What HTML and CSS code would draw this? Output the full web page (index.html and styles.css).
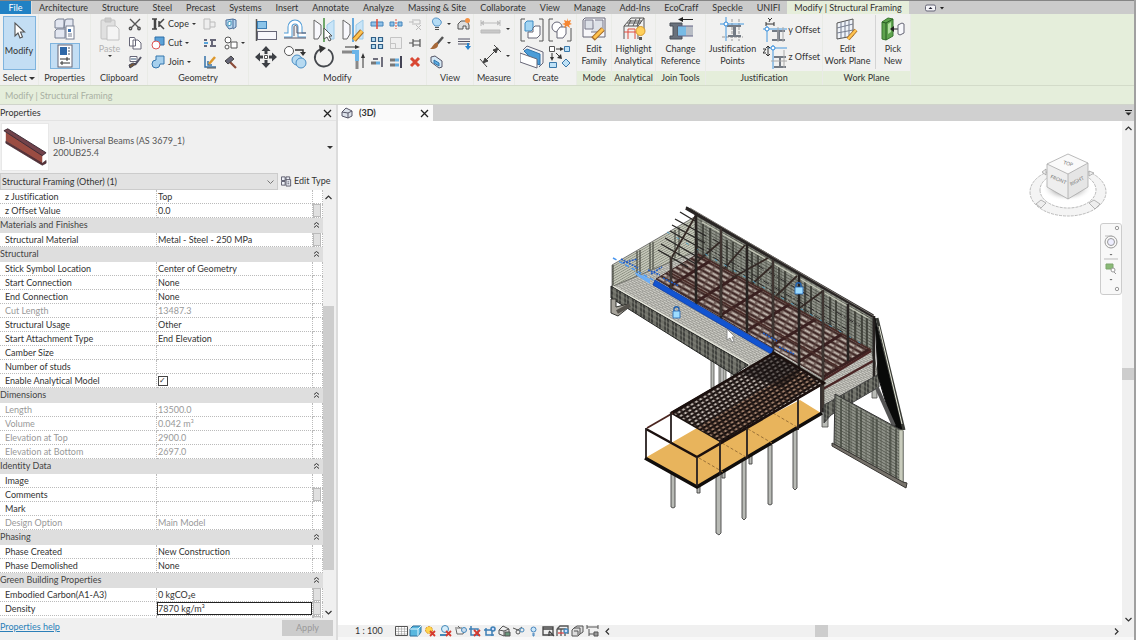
FILE: index.html
```html
<!DOCTYPE html>
<html lang="en">
<head>
<meta charset="utf-8">
<title>Modify | Structural Framing</title>
<link rel="stylesheet" href="styles.css">
</head>
<body>
<div class="app">
<nav class="tabs">
  <button class="tab tab-file">File</button>
  <button class="tab">Architecture</button><button class="tab">Structure</button><button class="tab">Steel</button><button class="tab">Precast</button><button class="tab">Systems</button><button class="tab">Insert</button><button class="tab">Annotate</button><button class="tab">Analyze</button><button class="tab">Massing &amp; Site</button><button class="tab">Collaborate</button><button class="tab">View</button><button class="tab">Manage</button><button class="tab">Add-Ins</button><button class="tab">EcoCraff</button><button class="tab">Speckle</button><button class="tab">UNIFI</button>
  <button class="tab tab-active">Modify | Structural Framing</button>
  <button class="tab-toggle" aria-label="Minimize ribbon"><svg width="20" height="10" viewBox="0 0 20 10"><rect x=".5" y="2" width="10" height="6" rx="1.5" fill="#f4f4f8" stroke="#667"/><path d="M3.5 6h4L5.500 4z" fill="#223"/><path d="M15 4h4l-2 2.500z" fill="#222"/></svg></button>
</nav>

<div class="ribbon">
  <section class="panel p-select">
    <div class="panel-body"><button class="big pressed" aria-pressed="true"><svg class="i24" viewBox="0 0 24 24"><path d="M8 4v13l3-3 2 5 2.500-1-2-5h4z" fill="#fff" stroke="#555" stroke-width="1.100"/></svg><span>Modify</span></button></div>
    <h2>Select <i class="arr"></i></h2>
  </section>
  <section class="panel p-properties">
    <div class="panel-body stack">
      <button aria-label="Type properties"><svg class="i24" viewBox="0 0 24 24" fill="#e3e7f1" stroke="#777f91"><path d="M3 3l2-1h6v9H2V4zM12 3l2-1h6v9h-9zM3 13l1-1h8v9H2v-7z"/><rect x="13" y="9" width="8" height="13" fill="#fff"/><path d="M15 12h3v3h-3z" fill="#3b6fae" stroke="none"/><path d="M15 17h4M15 19h4"/></svg></button>
      <button class="pressed wide" aria-label="Properties"><svg class="i24" viewBox="0 0 24 24"><rect x="5" y="1" width="14" height="22" fill="#fff" stroke="#667"/><path d="M7 3h7v8H7z" fill="#2f68a8"/><path d="M15 4h2M15 7h2M15 10h2" stroke="#456"/><path d="M7 15h10M7 19h10M14 13v4M9 17v4" stroke="#333"/></svg></button>
    </div>
    <h2>Properties</h2>
  </section>
  <section class="panel p-clipboard">
    <div class="panel-body">
      <button class="big off" disabled><svg class="i24" viewBox="0 0 24 24" fill="#e0e0e0" stroke="#c2c2c2"><rect x="3" y="3" width="14" height="19" rx="1"/><path d="M7 1h6v4H7z" fill="#ccc"/><path d="M9 9h9l3 3v11H9z" fill="#f4f4f4"/></svg><span>Paste<br><i class="arr tiny up"></i></span></button>
      <div class="smalls">
        <button aria-label="Cut to clipboard"><svg class="i14" viewBox="0 0 14 14" fill="none" stroke="#555" stroke-width="1.400"><path d="M2 2l9 9M12 2L3 11"/><circle cx="2.500" cy="11.500" r="1.200"/><circle cx="11" cy="11.500" r="1.200"/></svg></button>
        <button aria-label="Copy to clipboard"><svg class="i14" viewBox="0 0 14 14" fill="#fff" stroke="#667"><path d="M1.500 1.500h5l1 2V10h-6zM5 4h5l3 3v6H5z"/></svg></button>
        <button aria-label="Match type"><svg class="i14" viewBox="0 0 14 14"><path d="M2 1.500h7v5H2z" fill="#fff" stroke="#667"/><path d="M3 3h5v2H3z" fill="#9ab"/><path d="M13 2L7 10" stroke="#556" stroke-width="2"/><path d="M8 9l-6 4-1-3 4-2z" fill="#775a38" stroke="#445"/></svg></button>
      </div>
    </div>
    <h2>Clipboard</h2>
  </section>
  <section class="panel p-geometry">
    <div class="panel-body">
      <div class="smalls">
        <button class="lab"><svg class="i14" viewBox="0 0 14 14" stroke="#444" fill="none"><path d="M1 2h5M1 12h5M3.500 2v10M4.500 2v10M8 7l5-5M8 7l5 5M8 4v6" stroke-width="1.500"/></svg>Cope<i class="arr tiny"></i></button>
        <button class="lab"><svg class="i14" viewBox="0 0 14 14"><path d="M4 1h9v8H4z" fill="#5ba2d8" stroke="#2e6ea8"/><circle cx="5" cy="9" r="4" fill="#fff" stroke="#d55"/></svg>Cut<i class="arr tiny"></i></button>
        <button class="lab"><svg class="i14" viewBox="0 0 14 14"><path d="M5 1h8v8H9a4 4 0 1 1-4-4z" fill="#a7d0ed" stroke="#3576ad"/></svg>Join<i class="arr tiny"></i></button>
      </div>
      <div class="smalls">
        <button aria-label="Split face"><svg class="i14" viewBox="0 0 14 14" fill="#eee" stroke="#bbb"><path d="M1 2h6v3h5v5H7v2H1zM7 5v5"/></svg></button>
        <button aria-label="Beam joins"><svg class="i14" viewBox="0 0 14 14" stroke="#667" stroke-width="2"><path d="M1 4h3M7 4h6M1 10h3M7 10h6M9 5v4"/><path d="M1 7h4" stroke="#58a4db"/></svg></button>
        <button aria-label="Paint"><svg class="i14" viewBox="0 0 14 14" fill="none"><path d="M2 1v11h11M5 6v4h4" stroke="#3472a8" stroke-width="1.500"/><path d="M6 9l6-7" stroke="#dd982c" stroke-width="2.500"/><path d="M4 13h9" stroke="#555"/></svg></button>
      </div>
      <div class="smalls">
        <button aria-label="Wall opening"><svg class="i14" viewBox="0 0 14 14"><path d="M2 3l7-1v9l-4 1-3-4zM9 2l3 1v7l-3 2" fill="#b7d5ef" stroke="#4c6f99"/><path d="M4 5l3-1v4L4 9z" fill="#fff" stroke="#49b"/></svg></button>
        <button class="lab"><svg class="i14" viewBox="0 0 14 14" fill="#fff" stroke="#555"><circle cx="4" cy="4" r="3"/><circle cx="3" cy="11" r="2"/><path d="M7 6h6v6H7z"/></svg><i class="arr tiny"></i></button>
        <button aria-label="Demolish"><svg class="i14" viewBox="0 0 14 14"><path d="M5 6l7 7" stroke="#8b4c39" stroke-width="2.200"/><path d="M1 6l6-5 3 3-6 5z" fill="#667" stroke="#444"/></svg></button>
      </div>
    </div>
    <h2>Geometry</h2>
  </section>
  <section class="panel p-modify">
    <div class="panel-body">
      <div class="quad">
        <button aria-label="Align"><svg class="i24" viewBox="0 0 24 24"><path d="M2.500 1v22" stroke="#555" stroke-width="1.500"/><rect x="3.500" y="3.500" width="9" height="7" fill="#8bc4e9" stroke="#3b7eb5"/><rect x="3.500" y="13.500" width="19" height="8" fill="#f7f7fb" stroke="#667"/></svg></button>
        <button aria-label="Offset"><svg class="i24" viewBox="0 0 24 24" fill="none"><path d="M1 17h6V9a5 5 0 0 1 10 0v8h6" stroke="#4d9ad5" stroke-width="5"/><path d="M1 17h6V9a5 5 0 0 1 10 0v8h6" stroke="#fff" stroke-width="3"/><path d="M1 20h22M11 18V9c0-2 3-2 3 0v6h9" stroke="#556"/></svg></button>
        <button aria-label="Mirror, pick axis"><svg class="i24" viewBox="0 0 24 24"><path d="M2 2l7 5v9l-3 5H2z" fill="#f8f8fc" stroke="#666"/><path d="M22 2l-7 5v9l3 5h4z" fill="#c9e5f8" stroke="#9ccbe9"/><path d="M12 0v24" stroke="#44913f" stroke-width="1.500"/><path d="M12 10v11l3-2 2 4 2-1-2-4h3z" fill="#fff" stroke="#555"/></svg></button>
        <button aria-label="Mirror, draw axis"><svg class="i24" viewBox="0 0 24 24"><path d="M2 2l7 5v9l-3 5H2z" fill="#f8f8fc" stroke="#666"/><path d="M22 2l-7 5v9l3 5h4z" fill="#c9e5f8" stroke="#9ccbe9"/><path d="M12 0v24" stroke="#3c92d6" stroke-width="1.500"/><path d="M13 22l8-9" stroke="#a66c26" stroke-width="5"/><path d="M13 22l8-9" stroke="#ffc34f" stroke-width="3"/></svg></button>
        <button aria-label="Move"><svg class="i24" viewBox="0 0 24 24" fill="#3d4045"><path d="M12 1l4.500 5h-3v3h-3V6h-3zM12 23l4.500-5h-3v-3h-3v3h-3zM1 12l5-4.500v3h3v3H6v3zM23 12l-5-4.500v3h-3v3h3v3z"/><path d="M10.500 10.500h3v3h-3z" fill="#fff" stroke="#555"/></svg></button>
        <button aria-label="Copy"><svg class="i24" viewBox="0 0 24 24"><circle cx="6" cy="6" r="4.500" fill="#fff" stroke="#555"/><path d="M12 5h8v3" stroke="#333" stroke-width="1.500" fill="none"/><path d="M17 7h6l-3 4z" fill="#333"/><circle cx="14" cy="15" r="5" fill="#b7daf1" stroke="#498ec5"/><circle cx="18" cy="18" r="5" fill="#b7daf1" stroke="#498ec5"/></svg></button>
        <button aria-label="Rotate"><svg class="i24" viewBox="0 0 24 24"><path d="M16 4.500a9 9 0 1 1-7-.5" fill="none" stroke="#45484d" stroke-width="1.800"/><path d="M7 0l7 3-6 5z" fill="#333"/></svg></button>
        <button aria-label="Trim"><svg class="i24" viewBox="0 0 24 24"><path d="M1 7h12M16 13v11" stroke="#888" stroke-width="3"/><path d="M11 7h5v9" stroke="#6bb5e9" stroke-width="4" fill="none"/><path d="M4 2h11M22 23V12" stroke="#333"/><path d="M14 0l5 2-5 2zM20 13l2-5 2 5z" fill="#333"/></svg></button>
      </div>
      <div class="smalls three">
        <button aria-label="Split element"><svg class="i14" viewBox="0 0 14 14"><path d="M1 5h12v4H1z" fill="#8fc1e8" stroke="#4484ba"/><path d="M7 2v10" stroke="#e34937" stroke-width="1.500"/></svg></button>
        <button aria-label="Split with gap"><svg class="i14" viewBox="0 0 14 14"><path d="M1 5h4v4H1zM9 5h4v4H9z" fill="#8fc1e8" stroke="#4484ba"/><path d="M7 2v10" stroke="#e34937" stroke-dasharray="2 1"/></svg></button>
        <button aria-label="Unpin"><svg class="i14" viewBox="0 0 14 14" fill="none" stroke="#bbb"><path d="M1 5h4M5 2v6M6 3h6v4H6M8 8l5 5M13 8l-5 5"/></svg></button>
        <button aria-label="Array"><svg class="i14" viewBox="0 0 14 14" fill="#b7dff5" stroke="#315f87" stroke-width="1.200"><path d="M1.500 1.500h4v4h-4zM8.500 1.500h4v4h-4zM1.500 8.500h4v4h-4zM8.500 8.500h4v4h-4z"/></svg></button>
        <button aria-label="Scale"><svg class="i14" viewBox="0 0 14 14" fill="#eee" stroke="#c4c4c4"><path d="M1.500 1.500h11v11h-11zM1.500 7.500h5v5h-5z"/></svg></button>
        <button aria-label="Pin"><svg class="i14" viewBox="0 0 14 14" fill="none" stroke="#555" stroke-width="1.200"><path d="M1 7h4M5 3v8M5 5h7v4H5M12 3v8"/></svg></button>
        <button aria-label="Trim single"><svg class="i14" viewBox="0 0 14 14"><path d="M1 8h5" stroke="#777" stroke-width="3"/><path d="M6 8h4" stroke="#66aee0" stroke-width="3"/><path d="M12 2v10M3 4h5" stroke="#445" stroke-width="1.500"/></svg></button>
        <button aria-label="Trim multiple"><svg class="i14" viewBox="0 0 14 14"><path d="M1 5h5M1 10h5" stroke="#777" stroke-width="3"/><path d="M6 5h4M6 10h4" stroke="#66aee0" stroke-width="3"/><path d="M12 1v12" stroke="#445" stroke-width="2"/></svg></button>
        <button aria-label="Delete"><svg class="i14" viewBox="0 0 14 14"><path d="M3 3l8 8M11 3l-8 8" stroke="#d94733" stroke-width="3"/></svg></button>
      </div>
    </div>
    <h2>Modify</h2>
  </section>
  <section class="panel p-view">
    <div class="panel-body">
      <div class="smalls">
        <button class="lab"><svg class="i14" viewBox="0 0 14 14"><path d="M5 9C-1 3 5-1 9 2s2 5 0 7z" fill="#b4dcf5" stroke="#5290c3"/><path d="M5 10.500h4M5 12.500h4" stroke="#555"/></svg><i class="arr tiny"></i></button>
        <button class="lab"><svg class="i14" viewBox="0 0 14 14"><path d="M13 1L7 8" stroke="#555" stroke-width="2.500"/><path d="M8 7C5 5 3 11 0 13c4 0 9 0 8-6z" fill="#a66839"/></svg><i class="arr tiny"></i></button>
        <button aria-label="Selection box"><svg class="i14" viewBox="0 0 14 14"><path d="M1 2l4-1 7 5v6l-3 1-8-6z" fill="#d7e9f5" stroke="#556"/><path d="M4 5l5 3v3L4 8z" fill="#5faee3" stroke="#2f75ad"/></svg></button>
      </div>
      <div class="smalls">
        <button aria-label="Displace"><svg class="i14" viewBox="0 0 14 14"><path d="M1 7l3-3h6l2 4v4H9V9H6v3H1z" fill="#ddd" stroke="#555"/><circle cx="10.500" cy="3.500" r="2.500" fill="#f49244"/></svg></button>
        <button aria-label="Linework"><svg class="i14" viewBox="0 0 14 14"><path d="M1 3h12M1 5.500h12M1 8h12" stroke="#556" stroke-width="1.200"/><path d="M10 7v3H8l3 4 3-4h-2V7z" fill="#2983cb"/></svg></button>
      </div>
    </div>
    <h2>View</h2>
  </section>
  <section class="panel p-measure">
    <div class="panel-body stack">
      <button class="lab"><svg class="i24" viewBox="0 0 24 24" stroke="#bbb" fill="#c8c8c8"><path d="M2 6h19M2 3v6M21 3v6M5 4L2 6l3 2M18 4l3 2-3 2"/><path d="M2 13h19v3H2z"/></svg><i class="arr tiny"></i></button>
      <button class="lab"><svg class="i24" viewBox="0 0 24 24" stroke="#444" fill="#444"><path d="M4 19L19 4M1 15l7 8M15 1l7 7"/><path d="M4 19l2-5 3 3zM19 4l-5 2 3 3z"/></svg><i class="arr tiny"></i></button>
    </div>
    <h2>Measure</h2>
  </section>
  <section class="panel p-create">
    <div class="panel-body"><div class="quad two">
      <button aria-label="Create assembly"><svg class="i24" viewBox="0 0 24 24"><path d="M5 1H1v22h4M19 1h4v22h-4" fill="none" stroke="#555"/><path d="M5 5l2-2h6v8l-2 2H5z" fill="#a4d5f2" stroke="#3d8bc4"/><path d="M8 14h5v-4l2-2h5v9l-3 3H8z" fill="#fff" stroke="#667"/></svg></button>
      <button aria-label="Create group"><svg class="i24" viewBox="0 0 24 24"><path d="M5 1H1v22h4M23 10v13h-4" fill="none" stroke="#555"/><circle cx="9" cy="9" r="5" fill="#fff" stroke="#667"/><path d="M9 13l3-4h6v7l-3 4H9z" fill="#fff" stroke="#667"/><path d="M19 0l1 3 3-1-1 3 2 1-3 1 1 3-3-2-3 2 1-3-3-1 3-1-1-3 3 1z" fill="#f58632"/></svg></button>
      <button aria-label="Create parts"><svg class="i24" viewBox="0 0 24 24"><path d="M3 5l4-4 16 6v11l-4 4" fill="#f3f3f5" stroke="#667"/><path d="M4 6l3-2 13 5v11l-3-1z" fill="#4b9cd7" stroke="#2f75ad"/><path d="M0 8l17 6v9L0 17z" fill="#fff" stroke="#667"/></svg></button>
      <button aria-label="Create similar"><svg class="i24" viewBox="0 0 24 24" fill="#bee1f6" stroke="#3a78a9"><path d="M1.500 1.500h5v5h-5z" fill="#fff" stroke="#555"/><path d="M16.500 1.500h5v5h-5zM1.500 17.500h7v5h-7zM18 14l4 4-4 4-4-4z"/><path d="M8 4h5M4 8v5M8 8l5 5" stroke="#333"/><path d="M12 2l4 2-4 2zM2 12l2 4 2-4zM13 9l1 5-5-1z" fill="#333" stroke="none"/></svg></button>
    </div></div>
    <h2>Create</h2>
  </section>
  <section class="panel ctx p-mode">
    <div class="panel-body"><button class="big"><svg class="i24" viewBox="0 0 24 24"><path d="M1 3l2-2h20v19H1z" fill="#f7f7fa" stroke="#667"/><path d="M3 3h8v9H3zM13 3h8v12H9" fill="#dde1e8" stroke="#778"/><path d="M11 22l10-10" stroke="#a66c26" stroke-width="5"/><path d="M12 21l9-9" stroke="#ffc34f" stroke-width="3"/></svg><span>Edit<br>Family</span></button></div>
    <h2>Mode</h2>
  </section>
  <section class="panel ctx p-analytical">
    <div class="panel-body"><button class="big"><svg class="i24" viewBox="0 0 24 24"><path d="M2 9l7-8h13v12M2 9h14l6-8M7 4h13M5 6h14M2 9v13M16 9v13M9 3L6 9M14 2l-3 7M18 1l-3 8" fill="none" stroke="#555"/><path d="M6 22V12h7v10M2 15h14" fill="none" stroke="#df4c3e"/><circle cx="18.500" cy="14" r="4.500" fill="#ffd05b" stroke="#d79b2e"/><path d="M17 20h3v3h-3z" fill="#555"/></svg><span>Highlight<br>Analytical</span></button></div>
    <h2>Analytical</h2>
  </section>
  <section class="panel ctx p-join">
    <div class="panel-body"><button class="big"><svg class="i24" viewBox="0 0 24 24"><path d="M1 6h12v3H9v10h4v3H1v-3h3V9H1z" fill="#69717b" stroke="#484f58"/><path d="M9 9h8v10H9z" fill="#78bbe5"/><path d="M17 9h7v10h-7z" fill="#b8bdc5"/><path d="M9 9h15M9 19h15" stroke="#668"/><path d="M24 2.500H13" stroke="#222"/><path d="M14 0v5l-5-2.500z" fill="#222"/></svg><span>Change<br>Reference</span></button></div>
    <h2>Join Tools</h2>
  </section>
  <section class="panel ctx p-just">
    <div class="panel-body">
      <button class="big"><svg class="i24" viewBox="0 0 24 24"><path d="M12 2v22M19 2v22M2 20h21" stroke="#999" stroke-dasharray="3 1"/><path d="M7 8h14v2h-5v8h5v2H8v-2h5v-8H7z" fill="#747b84"/><path d="M6 0v24M0 7h24" stroke="#4598df"/><circle cx="6" cy="7" r="2" fill="#fff" stroke="#318bdb"/></svg><span>Justification<br>Points</span></button>
      <div class="stack">
        <button class="lab"><svg class="i24" viewBox="0 0 24 24"><path d="M9 12h13v2h-5v7h5v2H9v-2h5v-7H9z" fill="#747b84"/><path d="M4 8v16M0 11h24" stroke="#4598df"/><path d="M15 9v15M20 9v15" stroke="#aaa"/><circle cx="4" cy="11" r="2" fill="#fff" stroke="#318bdb"/><path d="M3 6h8M3 4v4M11 4v4M5 0l2 2 2-2M7 2L6 4" stroke="#333" fill="none"/></svg>y Offset</button>
        <button class="lab"><svg class="i24" viewBox="0 0 24 24"><path d="M11 11h12v2h-5v8h5v2H11v-2h5v-8h-5z" fill="#747b84"/><path d="M10 0v24M5 3h19" stroke="#4598df"/><path d="M8 16h16M21 5v18" stroke="#aaa"/><circle cx="10" cy="3" r="2" fill="#fff" stroke="#318bdb"/><path d="M5 2v9M3 3l2-2 2 2M3 9l2 2 2-2M0 4h3L0 8h3" stroke="#333" fill="none"/></svg>z Offset</button>
      </div>
    </div>
    <h2>Justification</h2>
  </section>
  <section class="panel ctx p-work">
    <div class="panel-body">
      <button class="big"><svg class="i24" viewBox="0 0 24 24"><path d="M2 6l16-4v17L2 22z" fill="#eff3f9" stroke="#555"/><path d="M6 5v16M10 4v16M14 3v17M2 11l16-4M2 16l16-3" stroke="#777f91"/><path d="M13 22l8-9" stroke="#a66c26" stroke-width="4"/><path d="M13 22l8-9" stroke="#ffc34f" stroke-width="2.500"/></svg><span>Edit<br>Work Plane</span></button>
      <button class="big pick"><svg class="i24" viewBox="0 0 24 24"><path d="M1 5l6-4 5 1v17l-7 4-4-1z" fill="#5ea34e" stroke="#37752e"/><path d="M1 5l4 1v17M5 6l7-4" fill="none" stroke="#275b22"/><path d="M7 7l3-2v10l-3 2z" fill="#b3dfa2"/><path d="M10 12h7" stroke="#222"/><path d="M13 9v6l-4-3z" fill="#222"/><path d="M17 8l4-2 2 1v9l-4 2-2-1z" fill="#f8f8fc" stroke="#667"/></svg><span>Pick<br>New</span></button>
    </div>
    <h2>Work Plane</h2>
  </section>
</div>
<div class="options">Modify | Structural Framing</div>

<main class="work">
<aside class="props">
  <header class="props-head"><span>Properties</span><button aria-label="Close properties"><svg width="9" height="9" viewBox="0 0 9 9"><path d="M1 1l7 7M8 1L1 8" stroke="#222" stroke-width="1.300"/></svg></button></header>
  <button class="type">
    <svg class="thumb" viewBox="0 0 48 48"><path d="M4 8l38 24v10L4 18z" fill="#9a4c42"/><path d="M2 7l4-2 40 25-4 3z" fill="#71424a" stroke="#3d2b35"/><path d="M4 18l38 23 4-3v3l-4 2L4 20z" fill="#5c3137" stroke="#3d2b35" stroke-width=".7"/></svg>
    <span>UB-Universal Beams (AS 3679_1)<br>200UB25.4</span><i class="arr"></i>
  </button>
  <div class="filter"><div class="combo"><select aria-label="Element filter"><option>Structural Framing (Other) (1)</option></select><svg width="7" height="5" viewBox="0 0 7 5"><path d="M.5 .5l3 3 3-3" fill="none" stroke="#777"/></svg></div>
  <button class="edit-type"><svg width="11" height="12" viewBox="0 0 12 12" fill="#eef1f8" stroke="#556"><path d="M.5 1.500h4v4h-4zM5.500 1.500h4v4h-4zM.5 6.500h4v4h-4z"/><path d="M5.500 4.500h5v7h-5z"/><path d="M7 7h2M7 9h2"/></svg>Edit Type</button></div>
  <div class="list">
    <div class="rows"><table>
      <colgroup><col class="c1"><col><col class="c3"></colgroup>
      <tr><th>z Justification</th><td>Top</td><td></td></tr>
      <tr><th>z Offset Value</th><td>0.0</td><td class="has"><button aria-label="Associate offset"></button></td></tr>
      <tr class="grp"><th colspan="2">Materials and Finishes</th><td><svg width="7" height="8" viewBox="0 0 7 8"><path d="M1 3.500l2.500-2 2.500 2M1 6.500l2.500-2 2.500 2" fill="none" stroke="#333"/></svg></td></tr>
      <tr><th>Structural Material</th><td>Metal - Steel - 250 MPa</td><td class="has"><button aria-label="Associate material"></button></td></tr>
      <tr class="grp"><th colspan="2">Structural</th><td><svg width="7" height="8" viewBox="0 0 7 8"><path d="M1 3.500l2.500-2 2.500 2M1 6.500l2.500-2 2.500 2" fill="none" stroke="#333"/></svg></td></tr>
      <tr><th>Stick Symbol Location</th><td>Center of Geometry</td><td></td></tr>
      <tr><th>Start Connection</th><td>None</td><td></td></tr>
      <tr><th>End Connection</th><td>None</td><td></td></tr>
      <tr class="ro"><th>Cut Length</th><td>13487.3</td><td></td></tr>
      <tr><th>Structural Usage</th><td>Other</td><td></td></tr>
      <tr><th>Start Attachment Type</th><td>End Elevation</td><td></td></tr>
      <tr><th>Camber Size</th><td></td><td></td></tr>
      <tr><th>Number of studs</th><td></td><td></td></tr>
      <tr><th><label for="eam">Enable Analytical Model</label></th><td><input type="checkbox" id="eam" checked></td><td></td></tr>
      <tr class="grp"><th colspan="2">Dimensions</th><td><svg width="7" height="8" viewBox="0 0 7 8"><path d="M1 3.500l2.500-2 2.500 2M1 6.500l2.500-2 2.500 2" fill="none" stroke="#333"/></svg></td></tr>
      <tr class="ro"><th>Length</th><td>13500.0</td><td></td></tr>
      <tr class="ro"><th>Volume</th><td>0.042 m³</td><td></td></tr>
      <tr class="ro"><th>Elevation at Top</th><td>2900.0</td><td></td></tr>
      <tr class="ro"><th>Elevation at Bottom</th><td>2697.0</td><td></td></tr>
      <tr class="grp"><th colspan="2">Identity Data</th><td><svg width="7" height="8" viewBox="0 0 7 8"><path d="M1 3.500l2.500-2 2.500 2M1 6.500l2.500-2 2.500 2" fill="none" stroke="#333"/></svg></td></tr>
      <tr><th>Image</th><td></td><td></td></tr>
      <tr><th>Comments</th><td></td><td class="has"><button aria-label="Associate comments"></button></td></tr>
      <tr><th>Mark</th><td></td><td></td></tr>
      <tr class="ro"><th>Design Option</th><td>Main Model</td><td></td></tr>
      <tr class="grp"><th colspan="2">Phasing</th><td><svg width="7" height="8" viewBox="0 0 7 8"><path d="M1 3.500l2.500-2 2.500 2M1 6.500l2.500-2 2.500 2" fill="none" stroke="#333"/></svg></td></tr>
      <tr><th>Phase Created</th><td>New Construction</td><td></td></tr>
      <tr><th>Phase Demolished</th><td>None</td><td></td></tr>
      <tr class="grp"><th colspan="2">Green Building Properties</th><td><svg width="7" height="8" viewBox="0 0 7 8"><path d="M1 3.500l2.500-2 2.500 2M1 6.500l2.500-2 2.500 2" fill="none" stroke="#333"/></svg></td></tr>
      <tr><th>Embodied Carbon(A1-A3)</th><td>0 kgCO₂e</td><td class="has"><button aria-label="Associate carbon"></button></td></tr>
      <tr><th><label for="den">Density</label></th><td class="has"><input type="text" id="den" value="7870 kg/m³"></td><td class="has"><button aria-label="Associate density"></button></td></tr>
      <tr><th></th><td></td><td class="has"><button aria-label="Associate"></button></td></tr>
    </table></div>
    <div class="vscroll"><svg width="7" height="5" viewBox="0 0 7 5"><path d="M.5 4l3-3 3 3" fill="none" stroke="#333" stroke-width="1.200"/></svg><i class="knob"></i><svg width="7" height="5" viewBox="0 0 7 5"><path d="M.5 1l3 3 3-3" fill="none" stroke="#333" stroke-width="1.200"/></svg></div>
  </div>
  <footer class="props-foot"><a href="#help">Properties help</a><button disabled>Apply</button></footer>
</aside>

<section class="view">
  <div class="docs">
    <div class="doc"><svg width="12" height="12" viewBox="0 0 12 12"><path d="M1 5l4-4 6 3v5l-4 2-6-2z" fill="#dce2ea" stroke="#556"/><path d="M1 5l6 1 4-2M7 6v5" stroke="#556" fill="none"/></svg><b>(3D)</b><button aria-label="Close view"><svg width="9" height="9" viewBox="0 0 9 9"><path d="M1 1l7 7M8 1L1 8" stroke="#222" stroke-width="1.300"/></svg></button></div>
    <button class="doc-menu" aria-label="View list"><svg width="7" height="6" viewBox="0 0 7 6"><path d="M0 .5h7" stroke="#222"/><path d="M.5 2.500h6l-3 3z" fill="#222"/></svg></button>
  </div>
  <div class="stage">
    <div class="canvas">
      <svg class="model" viewBox="600 195 320 350">
        <defs>
          <pattern id="tile" width="5" height="4" patternUnits="userSpaceOnUse" patternTransform="rotate(29)"><path d="M0 0h5v4H0z" fill="#d2d1ca"/><path d="M0 .5h5M0 2.500h5M1 .5v2M3.500 2.500v2" stroke="#8a8a84" stroke-width=".7"/></pattern>
          <pattern id="clad" width="5" height="3" patternUnits="userSpaceOnUse" patternTransform="skewY(29)"><path d="M0 0h5v3H0z" fill="#90938a"/><path d="M0 .5h5M1 0v3" stroke="#53564d" stroke-width=".8"/></pattern>
          <pattern id="cladl" width="9" height="2.500" patternUnits="userSpaceOnUse" patternTransform="skewY(-30)"><path d="M0 0h9v3H0z" fill="#c8cabd"/><path d="M0 .5h9" stroke="#74786a" stroke-width=".7"/></pattern>
          <pattern id="fascia" width="8" height="5" patternUnits="userSpaceOnUse" patternTransform="skewY(30)"><path d="M0 0h8v5H0z" fill="#6d6e66"/><path d="M1 0v5M4 0v5" stroke="#292a28" stroke-width="1.200"/><path d="M0 2h8" stroke="#999b91" stroke-width=".5"/></pattern>
          <pattern id="purlin" width="9" height="5" patternUnits="userSpaceOnUse" patternTransform="rotate(29)"><path d="M0 0h9v5H0z" fill="#8d7d76"/><path d="M0 1h9" stroke="#412a28" stroke-width="2"/><path d="M0 3.500h6" stroke="#cdc3bb" stroke-width=".9"/><path d="M7 0v5" stroke="#5c4641" stroke-width="1"/></pattern>
          <pattern id="joist" width="5" height="4" patternUnits="userSpaceOnUse" patternTransform="rotate(-31)"><path d="M0 0h5v4H0z" fill="#c9bfb8"/><path d="M0 1h5" stroke="#15100f" stroke-width="2.200"/><path d="M1 0l2 4" stroke="#261b19" stroke-width="2.200"/></pattern>
          <pattern id="joistb" width="5" height="4" patternUnits="userSpaceOnUse" patternTransform="rotate(-31)"><path d="M0 0h5v4H0z" fill="#a5846f"/><path d="M0 1h5" stroke="#120d0c" stroke-width="2.200"/><path d="M1 0l2 4" stroke="#281b17" stroke-width="2.200"/></pattern>
        </defs>
        <g fill="#b9bbb6" stroke="#4b4c4a" stroke-width=".8"><path d="M711 355h3v33h-3zM719 360h2v28h-2zM723 362h3v26h-3zM731 367h3v18h-3zM822 412h6v15h-6zM872 386h5v12h-5z"/></g>
        <path d="M612 265l84-49v38l-84 34z" fill="url(#cladl)" stroke="#555" stroke-width=".7"/>
        <path d="M613 265v45M637 251v26M640 250v26M650 243v30M653 242v30M675 230v28M679 227v29" stroke="#33352f"/>
        <path d="M611 287l86-36 176 98 5 29-54 35-2-33-48-28-27 17z" fill="url(#tile)" stroke="#6d6e67"/>
        <path d="M611 286l137 79-14 10-123-77z" fill="url(#fascia)" stroke="#252624"/>
        <path d="M613 286l136 78" stroke="#e9eadf" stroke-width="1.300"/>
        <path d="M611 299h5v8l12-3v4l-10 8-7-3z" fill="#a6a39b" stroke="#33332f"/><path d="M617 312l13-7" stroke="#55524c" stroke-width="4"/>
        <path d="M696 214l177 102v44L698 255z" fill="url(#clad)" stroke="#333"/>
        <g stroke="#34362f" stroke-width="1.500"><path d="M703 224v34M710 228v34M727 240v31M733 242v32M752 252v32M758 255v32M779 267v33M785 271v33M805 282v33M811 286v32M830 296v34M836 300v33M855 310v35M862 313v35M867 316v34"/></g>
        <path d="M656 279l42-25 171 95-46 29z" fill="url(#purlin)" stroke="#3f2928"/>
        <path d="M669 287l41-26M696 302l41-26M721 315l42-26M748 330l42-26M773 345l43-26M798 362l44-28M823 377l47-28" stroke="#3a2020" stroke-width="2.800"/>
        <path d="M669 272l173 97M698 254l173 96" stroke="#4a2d29" stroke-width="1.600"/>
        <path d="M823 379l48-28 5 22-52 31z" fill="url(#tile)"/><path d="M823 380l48-29M823 389l50-28" stroke="#4a2525" stroke-width="2.500"/>
        <path d="M686 208l187 108" stroke="#292524" stroke-width="3.500"/><path d="M690 208l184 108" stroke="#74706b" stroke-width="1"/>
        <path d="M702 222l166 96" stroke="#c4c7b7" stroke-width="1.300"/>
        <path d="M686 207l10 6M680 212l15 9M675 219l31 17M672 225l33 18M670 231l34 19M665 238l36 21M661 244l35 20M658 250l30 17" stroke="#282625" stroke-width="1.400"/>
        <path d="M672 257l24-42M697 262l23-20M724 269l21-24M732 278l36-20M752 284l20-18M776 296l21-20M801 307l22-16" stroke="#342925" stroke-width="1.800" fill="none"/>
        <path d="M707 248l139 81M713 257l130 75M713 239l147 87" stroke="#2b2828" stroke-dasharray="7 2 2 2"/>
        <path d="M667 232l195 112" stroke="#4c98b9" stroke-dasharray="3 8"/>
        <path d="M671 257v36M696 214v93M721 228v91M747 244v89M773 260v95M799 275v92M823 290v122M848 304v57M874 316v71" stroke="#272321" stroke-width="2.600"/>
        <path d="M671 257v34M721 228v88M773 260v90M823 290v118" stroke="#6c5952" stroke-width=".7"/>
        <path d="M655 280l118 69-2 5-118-69z" fill="#1254d1" stroke="#0a369e" stroke-width=".7"/>
        <g fill="none" stroke="#205bc4" stroke-width="1.600" stroke-dasharray="2 1"><path d="M621 259l17 9M623 263l14-4M648 270l12 5M651 274l11-7M663 278l16 8M763 333l14 8M779 347l15 7"/></g><path d="M613 258l42 23" stroke="#4b97ef" stroke-dasharray="4 3" stroke-width="1.500"/><path d="M635 272l15 7v5l-14-9z" fill="#6caef7"/>
        <path d="M824 405l55-31v13l-48 28-7 8z" fill="url(#fascia)" stroke="#444"/>
        <path d="M875 318l28 112-10-3-15-51z" fill="#090a09" stroke="#111"/><path d="M877 318l27 112" stroke="#383a35" stroke-width="3"/><path d="M879 326l23 98" stroke="#e5e7d8" stroke-width="1"/>
        <path d="M877 388l17 38" stroke="#555" stroke-width="4"/>
        <path d="M835 394l68 37v52l-69-39z" fill="url(#clad)" stroke="#333"/>
        <path d="M841 399v48M849 403v49M857 408v48M861 410v49M873 417v48M877 419v49M890 426v49M896 429v49" stroke="#393c35"/><path d="M899 430h4v53h-4z" fill="#c9ccbd" stroke="#666b60" stroke-width=".6"/>
        <path d="M832 443l71 39 4 1-1 5-74-42z" fill="#77736c" stroke="#373532"/>
        <g fill="#b8bab5" stroke="#444" stroke-width=".9"><path d="M671 474h4v33l-2 1-2-1zM697 486h3v7h-3zM716 474h5v59l-2 2-3-2zM742 459h4v59l-2 2-2-2zM768 445h4v59l-2 1-2-1zM793 430h4v58l-2 2-2-2zM722 470h3v8h-3zM749 456h3v8h-3z"/></g>
        <path d="M645 458l52-30 24 13 79-41 21 13-124 74z" fill="#e8b45c"/>
        <path d="M645 458l52 29 125-74" fill="none" stroke="#110e0c" stroke-width="3.500"/>
        <path d="M699 458l24 14M722 443l24 14M748 429l24 14M773 413l24 14" stroke="#9b7238" stroke-dasharray="3 2"/>
        <path d="M671 413l103-60 50 30-103 59z" fill="url(#joist)" stroke="#1c1412" stroke-width="1.500"/>
        <path d="M697 428l100-59 22 14-98 58z" fill="url(#joistb)"/>
        <path d="M740 373l34-20 28 17-20 18z" fill="#171212" opacity=".55"/>
        <path d="M671 413l103-60 50 30-127 74-51-28" fill="none" stroke="#1b100e" stroke-width="2.500"/>
        <path d="M647 428l26-15" stroke="#4b2620" stroke-width="1.800"/>
        <path d="M646 428v30M671 413v30M697 457v29M720 441v34M747 428v31M798 399v31M821 384v28" stroke="#282120" stroke-width="1.800"/>
        <g fill="#9ddcff" stroke="#1e5fae" stroke-width=".8"><path d="M674 311v-2c0-3 5-3 5 0v2" fill="none" stroke-width="1.300"/><path d="M673 311h7v7h-7z"/><path d="M796 287v-2c0-3 5-3 5 0v2" fill="none" stroke-width="1.300"/><path d="M795 287h8v7h-8z"/></g>
        <path d="M727 329v11l3-2 2 4 2-1-2-4h3z" fill="#fff" stroke="#777" stroke-width=".8"/>
      </svg>
      <svg class="cube" viewBox="0 0 80 68"><defs><radialGradient id="sh"><stop offset=".4" stop-color="#999"/><stop offset="1" stop-color="#fff" stop-opacity="0"/></radialGradient></defs>
        <path fill-rule="evenodd" d="M1 41a38 24 0 1 0 76 0a38 24 0 1 0-76 0M11 39a28 18 0 1 0 56 0a28 18 0 1 0-56 0" fill="#f4f4f4" stroke="#aaa" stroke-width=".8" stroke-dasharray="3 1"/>
        <ellipse cx="38" cy="37" rx="25" ry="13" fill="url(#sh)"/>
        <g fill="#eee" stroke="#999" stroke-width=".7"><path d="M7 53l5-4 5 3-5 5zM60 52l5-3 6 4-5 5zM13 21l4-3v6zM60 20l5 2-5 3z"/></g>
        <path d="M18 13L39 3l20 9-20 11z" fill="#fafafa"/><path d="M18 13l21 10v25L18 36z" fill="#eee"/><path d="M39 23l20-11v24L39 48z" fill="#e5e5e5"/><path d="M18 13L39 3l20 9-20 11zM18 13v23l21 12V23M39 48l20-12V12" fill="none" stroke="#aaa" stroke-width=".8"/>
        <text x="34" y="13" transform="rotate(15 34 13)">TOP</text><text x="21" y="27" transform="rotate(22 21 27)">FRONT</text><text x="42" y="35" transform="rotate(-27 42 35)">RIGHT</text>
      </svg>
      <div class="nav">
        <svg viewBox="0 0 20 70" fill="none" stroke="#999"><circle cx="16" cy="4" r="1.700"/><circle cx="10" cy="18" r="6"/><circle cx="10" cy="18" r="3.500" fill="#eef"/><path d="M4 12h7M3 35h14" stroke="#bbb"/><path d="M5 40h7v5H5z" fill="#8aba77" stroke="#7da66c"/><circle cx="12" cy="46" r="2" fill="#fff"/><path d="M13 48l2 2"/><path d="M8.500 30h3L10 31.500zM8.500 55h3L10 56.500z" fill="#666" stroke="none"/><circle cx="16" cy="65" r="1.700"/></svg>
      </div>
    </div>
    <div class="vscroll wide-scroll"><svg width="7" height="5" viewBox="0 0 7 5"><path d="M.5 4l3-3 3 3" fill="none" stroke="#333" stroke-width="1.200"/></svg><i class="knob"></i><svg width="7" height="5" viewBox="0 0 7 5"><path d="M.5 1l3 3 3-3" fill="none" stroke="#333" stroke-width="1.200"/></svg></div>
  </div>
  <div class="viewbar">
    <button class="scale">1 : 100</button>
    <div class="vicons">
      <button aria-label="Detail level"><svg viewBox="0 0 13 12"><path d="M.5 1.500h12v9H.5z" fill="#fff" stroke="#555"/><path d="M1 4h11M1 6.500h11M1 9h11M3.500 2v8M6.500 2v8M9.500 2v8" stroke="#888" stroke-width=".5"/></svg></button>
      <button aria-label="Visual style"><svg viewBox="0 0 13 12"><path d="M1 4l3-3h8v6l-3 4H1z" fill="#58b7df" stroke="#2e6f9b"/><path d="M1 4h8v7M9 4l3-3" fill="none" stroke="#e4f8ff"/></svg></button>
      <button aria-label="Sun path"><svg viewBox="0 0 13 12"><circle cx="5" cy="5" r="3.500" fill="#ffd64f" stroke="#dc9127" stroke-dasharray="2 1"/><path d="M6 6l5 5M11 6l-5 5" stroke="#d5392e" stroke-width="1.800"/></svg></button>
      <button aria-label="Shadows"><svg viewBox="0 0 13 12"><circle cx="6" cy="4" r="3.500" fill="#d7eefb" stroke="#4388b8"/><path d="M1 10h7" stroke="#4388b8" stroke-width="2"/><path d="M7 6l5 5M12 6l-5 5" stroke="#d5392e" stroke-width="1.800"/></svg></button>
      <button aria-label="Render"><svg viewBox="0 0 13 12" fill="none" stroke="#666"><path d="M1 3h7M2 4l1 5h6l2-5M4 1l2 2"/><circle cx="10" cy="5" r="2.500" fill="#cde" stroke="#48b"/></svg></button>
      <button aria-label="Crop view"><svg viewBox="0 0 13 12" fill="none" stroke="#3e7fb5" stroke-width="1.500"><path d="M1 4h9v7M3 1v9h9"/><path d="M6 5l6 6M12 5l-6 6" stroke="#d5392e" stroke-width="1.800"/></svg></button>
      <button aria-label="Crop region"><svg viewBox="0 0 13 12" fill="none" stroke="#3e7fb5" stroke-width="1.500"><path d="M1 5h8v6M3 3v7h8"/><circle cx="10" cy="4" r="2" fill="#cdf"/></svg></button>
      <button aria-label="Lock 3D view"><svg viewBox="0 0 13 12" fill="#eee" stroke="#555"><path d="M1 5l4-4 6 3v5l-5 2-5-2zM1 5l5 1 5-2M6 6v5"/><path d="M7 7h5v4H7z" fill="#69967b"/></svg></button>
      <button aria-label="Temporary hide"><svg viewBox="0 0 13 12" fill="#eee" stroke="#555"><path d="M1 3l5 2 4-3"/><circle cx="6" cy="7" r="2"/><circle cx="10" cy="5" r="2" stroke="#48b"/></svg></button>
      <button aria-label="Reveal hidden"><svg viewBox="0 0 13 12" fill="#cce8fa" stroke="#4684bd"><circle cx="6.500" cy="4.500" r="2.500"/><path d="M6 8v3h1V8"/></svg></button>
      <button aria-label="View properties"><svg viewBox="0 0 13 12" fill="#eee" stroke="#444" stroke-width="1.300"><path d="M1 2h10v8H1z"/><path d="M1 4h10M7 6l5 5M7 7v4"/></svg></button>
      <button aria-label="Analytical model"><svg viewBox="0 0 13 12" fill="none" stroke="#555" stroke-width="1.300"><path d="M1 4l3-3h8v8M1 4h8v7M1 4v7M5 4v7"/><path d="M2 8h6" stroke="#d44"/><circle cx="10" cy="6" r="2" fill="#cdf" stroke="#48b"/></svg></button>
      <button aria-label="Displacement sets"><svg viewBox="0 0 13 12" fill="#ddd" stroke="#555"><path d="M3 3l3-2h6v6l-3 2M1 5l2-2h6v6l-2 2H1z"/><path d="M3 6h4v4"/></svg></button>
      <button aria-label="Constraints"><svg viewBox="0 0 13 12" fill="none" stroke="#555"><path d="M1 2h11M1 0v4M12 0v4M3 4v7M3 9h6"/><path d="M8 7h4v4H8z" fill="#999"/></svg></button>
    </div>
    <div class="hscroll"><svg width="5" height="7" viewBox="0 0 5 7"><path d="M4 .5l-3 3 3 3" fill="none" stroke="#333" stroke-width="1.200"/></svg><i class="knob"></i><svg width="5" height="7" viewBox="0 0 5 7"><path d="M1 .5l3 3-3 3" fill="none" stroke="#333" stroke-width="1.200"/></svg></div>
  </div>
</section>
</main>
</div>
</body>
</html>
```
FILE: styles.css
```css
*{box-sizing:border-box}
body{margin:0;font:9px/12px Lato,"Noto Sans",sans-serif;font-variant-ligatures:none;color:#333;background:#f0f0f0}
button,input,select{font:inherit;font-variant-ligatures:none;color:inherit;margin:0;padding:0;border:0;background:none}
button{display:flex;align-items:center;justify-content:center;white-space:nowrap}
svg{display:block;flex:none}
.app{height:100vh;display:flex;flex-direction:column;border-right:2px solid #a0a0a0;overflow:hidden}

.tabs{display:flex;background:#cbcbcb;border-top:1px solid #858585;height:14px;flex:none}
.tab{padding:0 7px}
.tab-file{width:32px;background:#2181c4;color:#fff;border-right:1px solid #ddd}
.tab-active{background:#e6eedb}
.tab-toggle{margin-left:16px}

.ribbon{display:flex;background:#e5eedb;height:72px;flex:none;border-bottom:1px solid #d3dbc9}
.panel{display:flex;flex-direction:column;flex:none;background:#f1f1f0;border-right:1px solid #e9ebe6}
.panel-body{flex:1;display:flex;justify-content:center;padding-top:1px}
.panel h2{margin:0;height:14px;font-size:9px;line-height:14px;font-weight:400;text-align:center;white-space:nowrap}
.ctx h2{background:#e5eedb}
.i24{width:24px;height:24px}
.i14{width:14px;height:14px}
.big{flex-direction:column;justify-content:flex-start;gap:2px;height:54px;padding:2px 1px 0;line-height:12px}
.big span{text-align:center}
.off{color:#b3b3b3}
.pressed{background:#c3def4;border:1px solid #7fb4de}
.p-select .big{width:33px;margin-top:1px}
.wide{width:30px}
.arr{display:inline-block;flex:none;border:3px solid transparent;border-top-color:#333;border-bottom:0;vertical-align:middle}
.tiny{border-width:2px;border-bottom:0}
.up{vertical-align:text-top}
.stack,.smalls,.quad{display:grid;align-content:start;justify-items:start}
.stack{grid-auto-rows:26px;gap:1px;padding-top:2px;justify-items:center;justify-content:center}
.smalls{grid-auto-rows:18px;gap:1px}
.three{grid-template-columns:repeat(3,18px);justify-items:center}
.quad{grid-template-columns:repeat(4,29px);grid-auto-rows:26px;gap:1px 0;justify-items:center;padding-top:2px}
.two{grid-template-columns:repeat(2,28px)}
.lab{gap:3px}
.p-select{width:39px}
.p-properties{width:52px}
.p-clipboard{width:57px}
.p-clipboard .panel-body{gap:5px}
.p-geometry{width:101px}
.p-geometry .panel-body{gap:7px}
.p-modify{width:178px}
.p-view{width:47px}
.p-view .panel-body{gap:6px}
.p-measure{width:41px}
.p-create{width:62px}
.p-mode{width:35px}
.p-analytical{width:44px}
.p-join{width:50px}
.p-just{width:117px}
.p-just .panel-body{gap:6px}
.p-just .lab{gap:1px}
.p-work{width:88px}
.p-work .pick{border-left:1px solid #d4d4d4;width:34px;margin-left:4px}
.options{height:19px;flex:none;background:#e5eedb;color:#a9b0a3;padding:4px 5px;border-bottom:1px solid #d0d4cb}

.work{flex:1;display:flex;min-height:0}
.props{width:338px;flex:none;display:flex;flex-direction:column;background:#f0f0f0;border-right:2px solid #dcdcdc}
.props-head{display:flex;justify-content:space-between;height:16px;padding:2px 4px 0 0;border-bottom:1px solid #e3e3e3}
.type{height:52px;justify-content:flex-start;text-align:left;gap:4px;padding:0 3px 0 1px;color:#555}
.thumb{width:48px;height:48px;background:#fff;border:1px solid #e8e8e8}
.type .arr{margin-left:auto}
.filter{display:flex;height:17px}
.combo{position:relative;width:278px;background:#e2e2e2;border:1px solid #ccc}
.combo select{appearance:none;width:100%;height:100%;padding:0 1px}
.combo svg{position:absolute;right:3px;top:6px}
.edit-type{gap:2px;padding-left:3px;height:16px}
.list{flex:1;display:flex;min-height:0;overflow:hidden}
.rows{width:323px;overflow:hidden;background:#fff}
table{width:100%;table-layout:fixed;border-collapse:separate;border-spacing:0;line-height:12px;color:#333}
.c1{width:157px}
.c3{width:10px}
th,td{height:14px;padding:0 0 0 1px;text-align:left;font-weight:400;border-bottom:1px dotted #bbb;border-right:1px dotted #bbb;white-space:nowrap}
th{padding-left:5px}
.grp th,.grp td{height:15px;background:#dedede;border-color:#dedede;padding-left:0;color:#444}
.ro{color:#999}
.has{padding:0}
.has button{width:8px;height:13px;background:#e0e0e0;border:1px solid #bbb}
input[type=text]{display:block;width:100%;height:13px;border:1px solid #222}
input[type=checkbox]{appearance:none;display:block;width:10px;height:10px;border:1px solid #444}
input[type=checkbox]:checked::after{content:"✓";display:block;font:8px/8px "DejaVu Sans",sans-serif}
.vscroll{width:11px;display:flex;flex-direction:column;justify-content:space-between;align-items:center;padding:5px 0 3px;background:#f0f0f0}
.vscroll .knob{width:11px;height:264px;margin-top:102px;margin-bottom:36px;background:#cdcdcd}
.props-foot{height:22px;flex:none;display:flex;justify-content:space-between;padding:2px 3px 4px 0}
.props-foot a{color:#2b7fb8;line-height:14px}
.props-foot button{width:51px;background:#ccc;color:#999}

.view{flex:1;min-width:0;display:flex;flex-direction:column}
.docs{display:flex;justify-content:space-between;height:16px;flex:none;background:#d0d0d0}
.doc{width:95px;display:flex;align-items:center;gap:6px;padding:0 4px 0 3px;background:#fafafa}
.doc button{margin-left:auto}
.doc-menu{padding-right:2px}
.stage{flex:1;display:flex;min-height:0}
.canvas{position:relative;flex:1;background:#fff;overflow:hidden}
.model{position:absolute;left:262px;top:74px;width:320px;height:350px}
.cube{position:absolute;right:13px;top:30px;width:80px;height:68px}
.cube text{font:5px Lato,sans-serif;fill:#777}
.nav{position:absolute;right:1px;top:103px;width:20px;height:70px;background:#f8f8f8;outline:1px solid #ccc;border-radius:2px}
.wide-scroll{width:12px}
.wide-scroll .knob{width:12px;height:12px;margin:0}
.viewbar{height:15px;flex:none;display:flex;align-items:center;background:#f0f0f0;border-bottom:3px solid #f8f8f8}
.scale{margin-left:17px}
.vicons{width:204px;display:flex;justify-content:space-between;margin-left:12px}
.vicons svg{width:13px;height:12px}
.hscroll{flex:1;display:flex;justify-content:space-between;align-items:center;padding:0 15px 0 6px}
.hscroll .knob{width:13px;height:12px;background:#cdcdcd;margin-right:80px}
```
